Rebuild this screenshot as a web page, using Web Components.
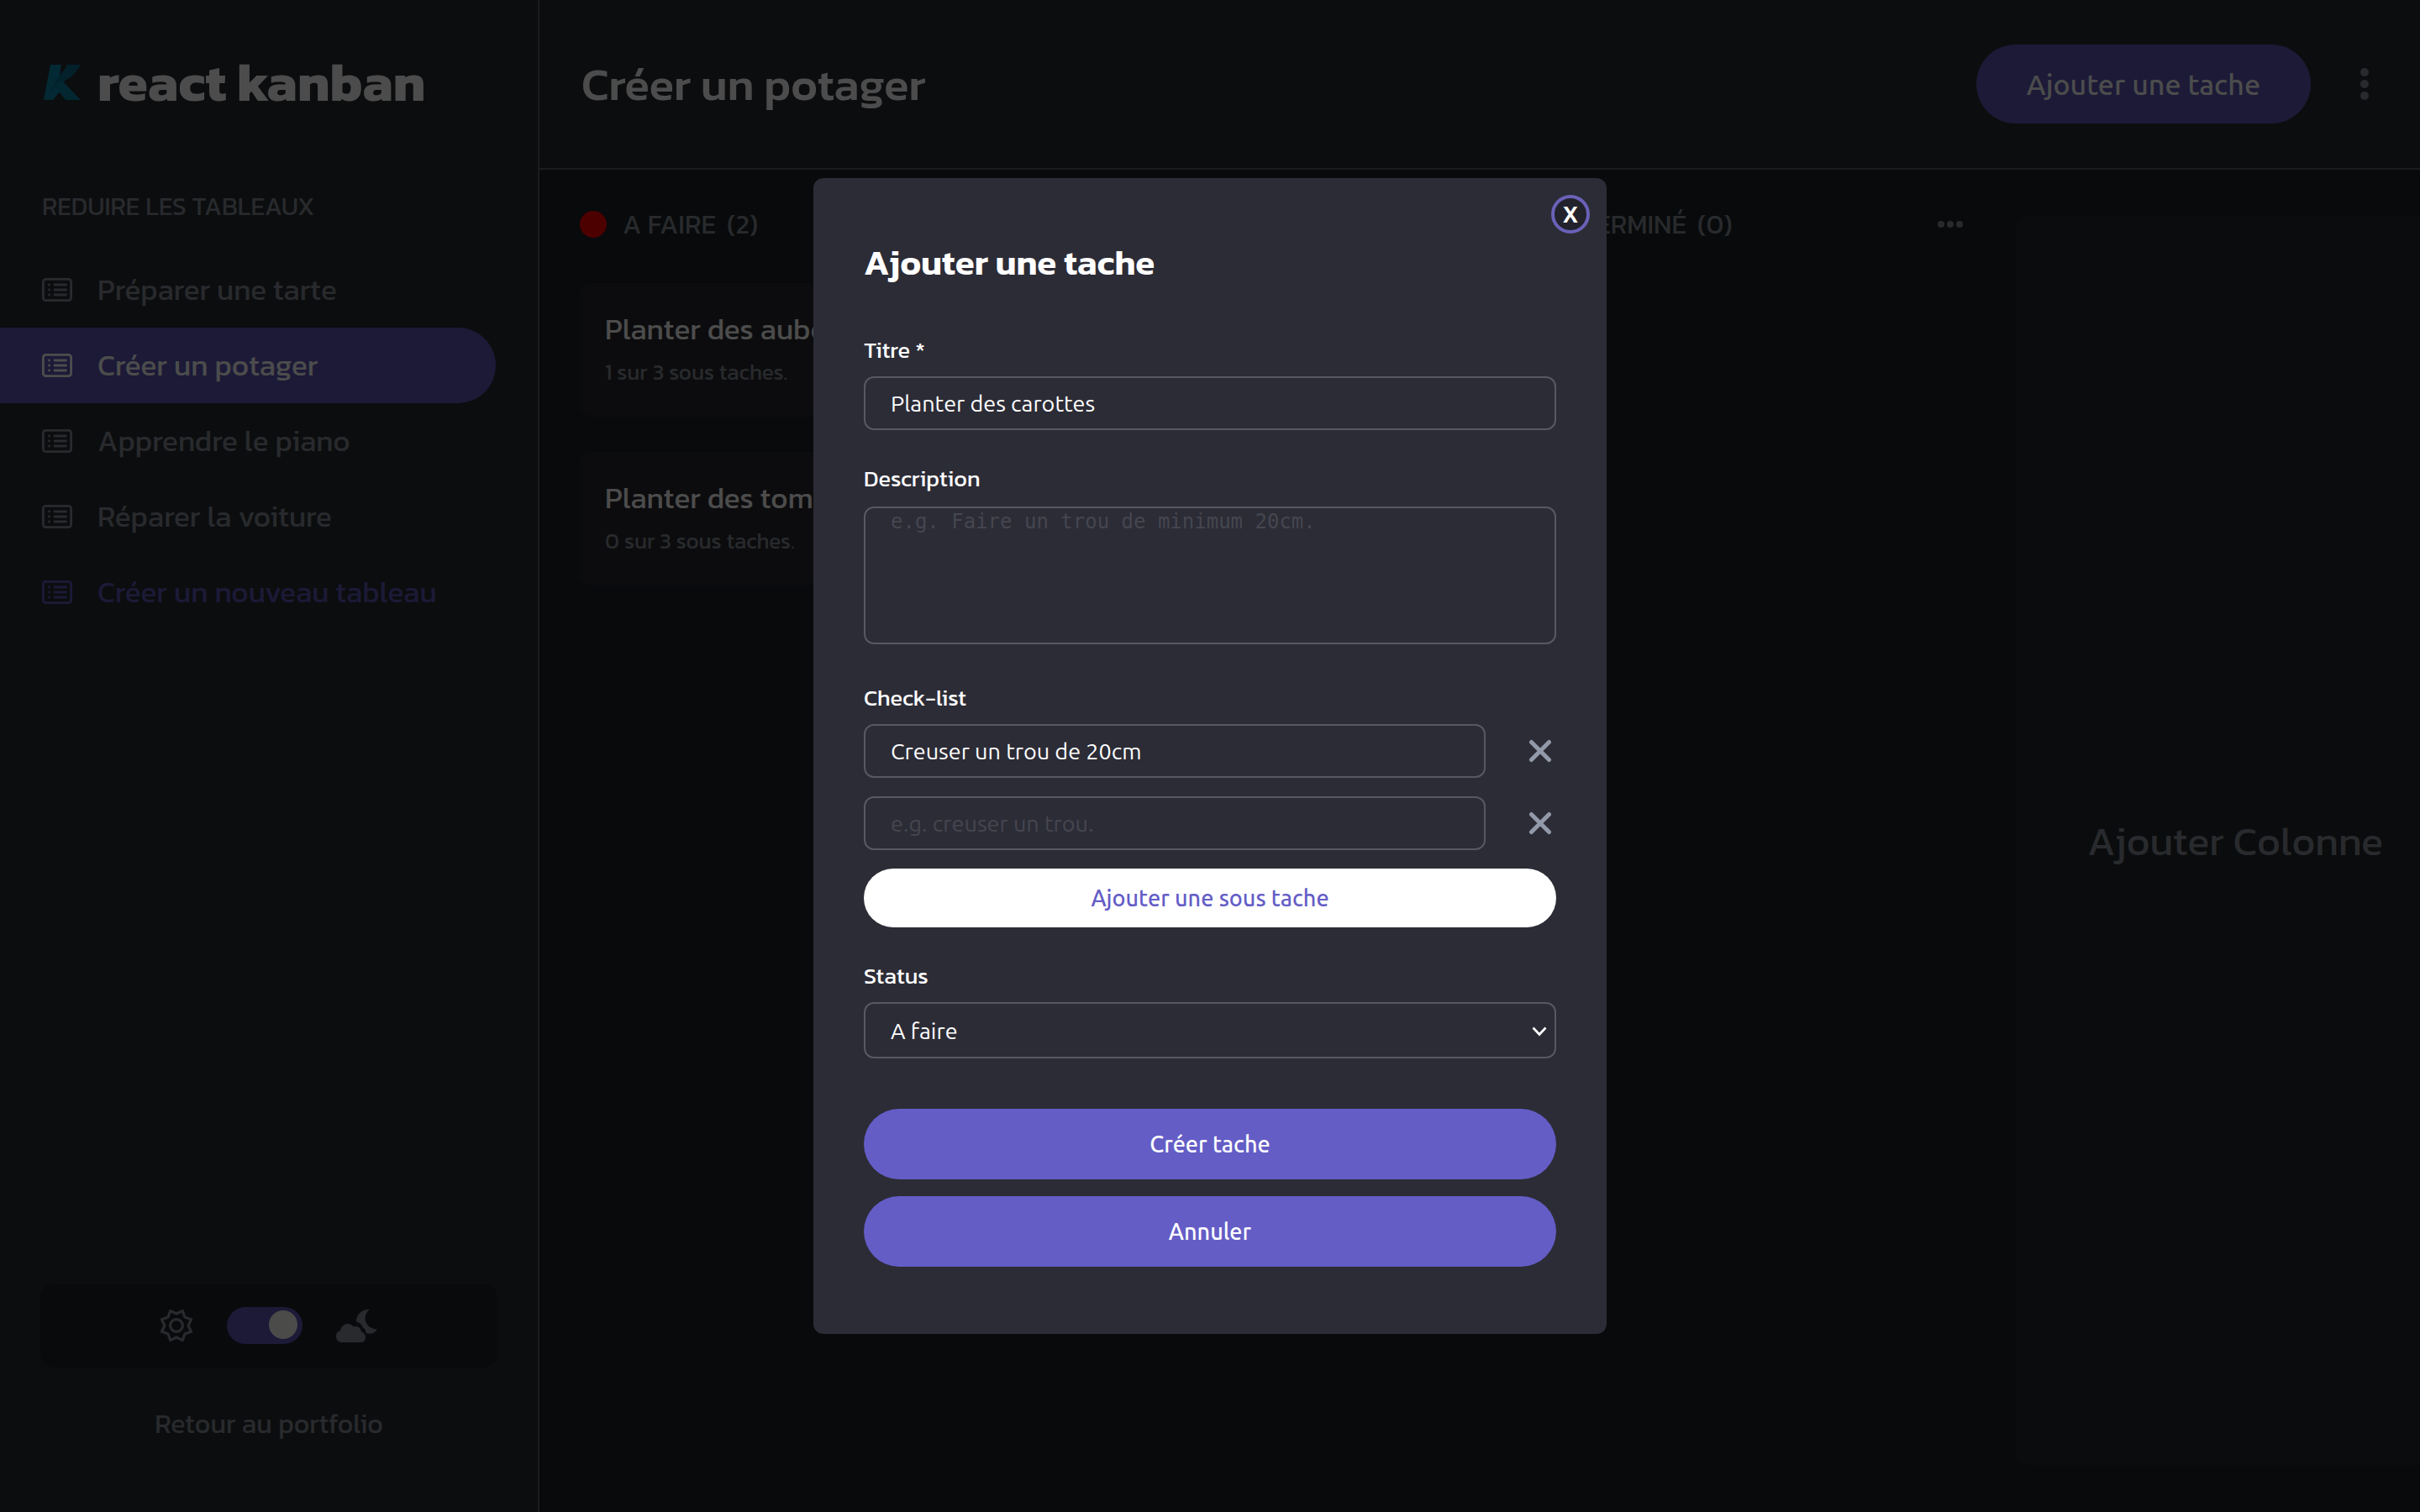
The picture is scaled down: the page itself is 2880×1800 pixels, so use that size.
<!DOCTYPE html>
<html lang="fr">
<head>
<meta charset="utf-8">
<title>React kanban</title>
<style>
  :root {
    --surface: #2b2d34;
    --canvas: #1d2228;
    --line: #5a5e64;
    --accent: #645dc6;
    --accent-deep: #5e59ba;
    --muted: #868d96;
    --title-font: Kanit, "Noto Sans", sans-serif;
    --ui-font: Ubuntu, "Noto Sans", sans-serif;
  }
  html, body { margin: 0; height: 100%; }
  body { background: var(--canvas); color: #fff; font-family: var(--title-font); overflow: hidden; }
</style>
</head>
<body>
<kanban-app>
  <kanban-sidebar slot="side">
    <board-link>Préparer une tarte</board-link>
    <board-link active>Créer un potager</board-link>
    <board-link>Apprendre le piano</board-link>
    <board-link>Réparer la voiture</board-link>
    <board-link create>Créer un nouveau tableau</board-link>
  </kanban-sidebar>
  <board-header slot="head">Créer un potager</board-header>
  <board-column name="A FAIRE" count="2" style="--dot:#ff0000">
    <task-card>Planter des aubergines<span slot="info">1 sur 3 sous taches.</span></task-card>
    <task-card>Planter des tomates<span slot="info">0 sur 3 sous taches.</span></task-card>
  </board-column>
  <board-column></board-column>
  <board-column name="TERMINÉ" count="0" style="--dot:#00c000"></board-column>
  <add-column>Ajouter Colonne</add-column>
</kanban-app>
<task-dialog>Ajouter une tache</task-dialog>

<script>
const define = (name, html, setup) => {
  const template = document.createElement('template');
  template.innerHTML = '<style>*{box-sizing:border-box}</style>' + html;
  customElements.define(name, class extends HTMLElement {
    constructor() {
      super();
      this.attachShadow({ mode: 'open' }).append(template.content.cloneNode(true));
    }
    connectedCallback() { if (setup) setup(this, this.shadowRoot); }
  });
};

define('kanban-app', `
<style>
  :host { display: grid; grid-template: auto 1fr / 642px 1fr; height: 100vh; }
  slot[name=side]::slotted(*) { grid-row: 1 / 3; }
  main { display: flex; gap: 60px; padding: 41px 0 56px 48px; overflow: hidden; min-width: 0; }
</style>
<slot name="side"></slot><slot name="head"></slot>
<main><slot></slot></main>`);

define('kanban-sidebar', `
<style>
  :host { display: flex; flex-direction: column; background: var(--surface); border-right: 2px solid var(--line); }
  .logo { display: flex; align-items: center; gap: 18px; margin: 50px 40px 78px 50px; font: 700 64px/96px var(--title-font); }
  .toggle-list { margin: 0 50px 32px; padding: 0; border: 0; background: none; text-align: left; color: var(--muted); font: 400 30px/44px var(--title-font); }
  nav { display: flex; flex-direction: column; padding-right: 50px; }
  .theme { display: flex; align-items: center; justify-content: center; gap: 40px; height: 100px; margin: auto 48px 43px; border-radius: 16px; background: var(--canvas); color: var(--muted); }
  input { appearance: none; display: flex; justify-content: flex-end; width: 90px; height: 44px; margin: 0; padding: 4px 6px; border-radius: 22px; background: var(--accent-deep); }
  input::before { content: ""; width: 34px; height: 34px; border-radius: 50%; background: #fbfbf8; }
  .back { margin: 0 auto 81px; color: var(--muted); font: 400 32px/48px var(--title-font); text-decoration: none; }
</style>
<div class="logo">
  <svg width="48" height="43" viewBox="0 0 48 43" aria-hidden="true">
    <path d="M10 0H23L20 18L26 26L13 42H2Z" fill="#0b8bb0"/>
    <path d="M19 14C25 9 28 4 30 0H46C41 9 34 16 26 20L10 32Z" fill="#0a7090"/>
    <path d="M12 26L24 19L46 42H28L18 29Z" fill="#0c82a4"/>
  </svg>
  <span>react kanban</span>
</div>
<button class="toggle-list" type="button">REDUIRE LES TABLEAUX</button>
<nav><slot></slot></nav>
<div class="theme">
  <svg width="40" height="40" viewBox="0 0 40 40" fill="none" stroke="currentColor" stroke-width="3.200" stroke-linejoin="round" aria-hidden="true">
    <path d="M27.3 2.4L29.9 10.1L37.6 12.7L34 20L37.6 27.3L29.9 29.9L27.3 37.6L20 34L12.7 37.6L10.1 29.9L2.4 27.3L6 20L2.4 12.7L10.1 10.1L12.7 2.4L20 6Z"/>
    <circle cx="20" cy="20" r="7.4"/>
  </svg>
  <input type="checkbox" role="switch" checked>
  <svg width="50" height="40" viewBox="0 0 50 40" fill="currentColor" aria-hidden="true">
    <path d="M40 .5C30 1 24 7 24 15.500C28 16.500 30.500 18.500 31.500 22C34 23.500 35.500 26 35.500 29C41 31 46 29 49 24.500C40 24.500 34 18 34.500 10.500C35 6 37 3 40 .5Z"/>
    <path d="M6 40C2 40 0 36 0 33C0 29 2 27 5 26C6 21 9.500 18 13.500 18C17 18 19 19.500 20.500 21.500C25 20 29.500 22.500 30 27.500C33 28.500 35 31 35 34C35 37.500 33 40 29.500 40Z"/>
  </svg>
</div>
<a class="back" href="#">Retour au portfolio</a>`);

define('board-link', `
<style>
  :host { display: block; color: var(--muted); }
  :host([active]) { color: #fff; }
  :host([create]) { color: var(--accent-deep); }
  a { display: flex; align-items: center; gap: 30px; height: 90px; padding-left: 50px; border-radius: 0 45px 45px 0; color: inherit; font: 400 35px/52px var(--title-font); text-decoration: none; }
  :host([active]) a { background: var(--accent-deep); }
</style>
<a href="#">
  <svg width="36" height="28" viewBox="2 0 36 28" fill="none" stroke="currentColor" stroke-width="2.8" stroke-linecap="round" aria-hidden="true">
    <rect x="3.400" y="1.400" width="33.200" height="25.200" rx="3"/>
    <path d="M17 8H30.500M17 14H30.500M17 20H30.500M10.500 8h.2M10.500 14h.2M10.500 20h.2"/>
  </svg>
  <span><slot></slot></span>
</a>`);

define('board-header', `
<style>
  :host { display: flex; align-items: center; gap: 48px; height: 202px; padding: 0 50px; background: var(--surface); border-bottom: 2px solid var(--line); box-sizing: border-box; }
  h1 { flex: 1; margin: 0; font: 500 54px/80px var(--title-font); }
  .add { height: 94px; padding: 0 60px; border: 0; border-radius: 47px; background: var(--accent-deep); color: #fff; font: 500 34px/40px var(--ui-font); }
  .more { display: grid; place-items: center; width: 32px; height: 60px; padding: 0; border: 0; background: none; color: var(--muted); }
</style>
<h1><slot></slot></h1>
<button class="add" type="button">Ajouter une tache</button>
<button class="more" type="button">
  <svg width="12" height="40" viewBox="0 0 12 40" fill="currentColor" aria-hidden="true"><circle cx="6" cy="6" r="5"/><circle cx="6" cy="20" r="5"/><circle cx="6" cy="34" r="5"/></svg>
</button>`);

define('board-column', `
<style>
  :host { flex: none; display: flex; flex-direction: column; gap: 44px; width: 510px; }
  header { display: flex; align-items: center; gap: 19px; height: 48px; margin-bottom: 2px; color: var(--muted); font: 400 32px/48px var(--title-font); }
  .dot { width: 32px; height: 32px; border-radius: 50%; background: var(--dot); }
  h2 { display: flex; gap: 13px; flex: 1; margin: 0; font: inherit; }
  button { display: grid; place-items: center; width: 38px; height: 40px; padding: 0; border: 0; background: none; color: inherit; }
</style>
<header>
  <span class="dot"></span>
  <h2><span class="name"></span><span class="count"></span></h2>
  <button type="button">
    <svg width="32" height="10" viewBox="0 0 32 10" fill="currentColor" aria-hidden="true"><circle cx="5" cy="5" r="4"/><circle cx="16" cy="5" r="4"/><circle cx="27" cy="5" r="4"/></svg>
  </button>
</header>
<slot></slot>`, (host, root) => {
  if (!host.hasAttribute('name')) { root.querySelector('header').remove(); return; }
  root.querySelector('.name').textContent = host.getAttribute('name');
  root.querySelector('.count').textContent = '(' + host.getAttribute('count') + ')';
});

define('task-card', `
<style>
  :host { display: block; box-sizing: border-box; padding: 28px 30px 32px; border-radius: 12px; background: #2a2b30; box-shadow: 0 4px 6px rgba(54, 78, 126, .1); }
  h3 { margin: 0 0 5px; font: 400 35px/54px var(--title-font); }
  p { margin: 0; color: var(--muted); font: 400 26px/38px var(--title-font); }
</style>
<h3><slot></slot></h3>
<p><slot name="info"></slot></p>`);

define('add-column', `
<style>
  :host { flex: none; display: flex; width: 520px; margin-top: 14px; }
  button { flex: 1; border: 0; border-radius: 12px; background: #26282d; color: var(--muted); font: 400 48px/72px var(--title-font); }
</style>
<button type="button"><slot></slot></button>`);

define('task-dialog', `
<style>
  :host { position: fixed; inset: 0; display: grid; place-items: center; background: rgba(0, 0, 0, .7); }
  section { position: relative; width: 944px; max-width: 100%; padding: 70px 60px 80px; border-radius: 12px; background: #2c2c36; }
  h2 { margin: 0 0 53px; font: 600 42px/62px var(--title-font); }
  .close { position: absolute; top: 20px; right: 20px; width: 46px; height: 46px; padding: 0; border: 4px solid #6a61b8; border-radius: 50%; background: #22222c; color: #fff; font: 700 27px/38px var(--ui-font); }
  form { display: flex; flex-direction: column; gap: 38px; }
  .field { display: flex; flex-direction: column; gap: 11px; }
  .field.tall { gap: 13px; padding-bottom: 6px; }
  .list { display: flex; flex-direction: column; gap: 22px; }
  label { font: 400 27px/40px var(--title-font); }
  input, select, textarea { display: block; width: 100%; margin: 0; border: 2px solid #575864; border-radius: 12px; background: transparent; color: #fff; outline: 0; }
  input { height: 64px; padding: 0 30px; font: 400 27px/32px var(--ui-font); }
  textarea { height: 164px; padding: 2px 30px; resize: none; font: 24px/28px "DejaVu Sans Mono", monospace; }
  ::placeholder { color: #454650; opacity: 1; }
  .row { display: flex; align-items: center; gap: 46px; }
  .row input { flex: 1; min-width: 0; }
  .remove { display: grid; place-items: center; width: 38px; height: 38px; padding: 0; border: 0; background: none; }
  .select { position: relative; }
  select { appearance: none; height: 67px; padding: 0 30px; font: 400 27px/32px var(--ui-font); }
  .select svg { position: absolute; right: 11px; top: 50%; margin-top: -5px; pointer-events: none; }
  .pill { width: 100%; border: 0; height: 84px; border-radius: 42px; background: var(--accent); color: #fff; font: 500 27px/32px var(--ui-font); }
  .pill.light { height: 70px; border-radius: 35px; background: #fff; color: var(--accent); }
  .actions { display: flex; flex-direction: column; gap: 20px; padding-top: 22px; }
</style>
<section role="dialog" aria-labelledby="heading">
  <button class="close" type="button">X</button>
  <h2 id="heading"><slot></slot></h2>
  <form>
    <div class="field"><label for="title">Titre *</label><input id="title" value="Planter des carottes"></div>
    <div class="field tall"><label for="description">Description</label><textarea id="description" placeholder="e.g. Faire un trou de minimum 20cm."></textarea></div>
    <div class="field">
      <label id="steps" for="step">Check-list</label>
      <div class="list">
        <div class="row"><input id="step" value="Creuser un trou de 20cm"><button class="remove" type="button"><svg width="28" height="28" viewBox="0 0 28 28" stroke="#9299a8" stroke-width="5" stroke-linecap="round" aria-hidden="true"><path d="M3.500 3.500L24.500 24.500M24.500 3.500L3.500 24.500"/></svg></button></div>
        <div class="row"><input aria-labelledby="steps" placeholder="e.g. creuser un trou."><button class="remove" type="button"><svg width="28" height="28" viewBox="0 0 28 28" stroke="#9299a8" stroke-width="5" stroke-linecap="round" aria-hidden="true"><path d="M3.500 3.500L24.500 24.500M24.500 3.500L3.500 24.500"/></svg></button></div>
        <button class="pill light" type="button">Ajouter une sous tache</button>
      </div>
    </div>
    <div class="field">
      <label for="status">Status</label>
      <div class="select">
        <select id="status"><option>A faire</option></select>
        <svg width="18" height="12" viewBox="0 0 18 12" fill="none" stroke="#fff" stroke-width="2.600" aria-hidden="true"><path d="M1.500 1.500L9 9.500L16.500 1.500"/></svg>
      </div>
    </div>
    <div class="actions">
      <button class="pill" type="button">Créer tache</button>
      <button class="pill" type="button">Annuler</button>
    </div>
  </form>
</section>`);
</script>
</body>
</html>
